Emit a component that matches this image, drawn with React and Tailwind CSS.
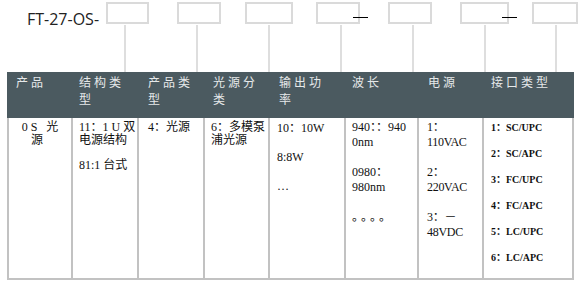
import React from 'react';

const boxes = [
    { ml: 'ml-0', w: 'w-[43px]', line: 'ml-[18px]', dash: false },
    { ml: 'ml-[28px]', w: 'w-[44px]', line: 'ml-[19px]', dash: false },
    { ml: 'ml-[24px]', w: 'w-[48px]', line: 'ml-[23px]', dash: false },
    { ml: 'ml-[23px]', w: 'w-[44px]', line: 'ml-[24px]', dash: true },
    { ml: 'ml-[28px]', w: 'w-[44px]', line: 'ml-[24px]', dash: false },
    { ml: 'ml-[28px]', w: 'w-[49px]', line: 'ml-[24px]', dash: true },
    { ml: 'ml-[23px]', w: 'w-[46px]', line: 'ml-[23px]', dash: false },
];

const headers = [
    { pad: 'pl-[7px]', lines: ['产品'] },
    { pad: 'pl-[6px]', lines: ['结构类', '型'] },
    { pad: 'pl-[9px]', lines: ['产品类', '型'] },
    { pad: 'pl-[8px]', lines: ['光源分', '类'] },
    { pad: 'pl-[9px]', lines: ['输出功', '率'] },
    { pad: 'pl-[6px]', lines: ['波长'] },
    { pad: 'pl-[9px]', lines: ['电源'] },
    { pad: 'pl-[7px]', lines: ['接口类型'] },
];

const serif = "font-['Liberation_Serif','Noto_Sans_CJK_SC',serif]";

export default function App() {
    return (
        <div className="w-[578px] h-[287px] bg-white overflow-hidden text-black">
            {/* code boxes */}
            <div className="flex h-[72px]">
                <div className="w-[106px] pl-[27px] pt-[9px] text-[16px] leading-[20px] text-[#222] font-['Open_Sans',sans-serif]">
                    FT-27-OS-
                </div>
                {boxes.map((b, i) => (
                    <div key={i} className={`flex flex-col pt-[2px] ${b.ml}`}>
                        <div className={`relative h-[22px] border-2 border-[#dadada] ${b.w}`}>
                            {b.dash && <div className="absolute right-[-10px] top-[13px] w-[15px] h-[1px] bg-black" />}
                        </div>
                        <div className={`w-[2px] h-[47px] mt-[1px] bg-[#dedede] ${b.line}`} />
                    </div>
                ))}
            </div>

            <div className="ml-[7px] w-[567px]">
                {/* header */}
                <div className="grid grid-cols-[62px_64px_64px_63px_74px_71px_63px_88px] gap-x-[2px] px-[2px] h-[46px] bg-[#4b5a60] text-[#e6e9ea] text-[12px] leading-[17px] tracking-[3px] font-['Noto_Sans_CJK_SC',sans-serif]">
                    {headers.map((h, i) => (
                        <div key={i} className={`pt-[1px] ${h.pad}`}>
                            {h.lines.map((l, j) => <div key={j}>{l}</div>)}
                        </div>
                    ))}
                </div>

                {/* body */}
                <div className={`grid grid-cols-[62px_64px_64px_63px_74px_71px_63px_88px] gap-x-[2px] px-[2px] pb-[2px] h-[162px] bg-[#c2c2c2] text-[12px] text-[#111] ${serif}`}>
                    <div className="bg-white pt-[3px] text-center leading-[12.5px]">
                        <div className="tracking-[3px] pl-[3px]">0S 光</div>
                        <div className="pr-[6px]">源</div>
                    </div>
                    <div className="bg-white pt-[3px] pl-[6px] leading-[12.5px]">
                        <div>11：1 U 双</div>
                        <div>电源结构</div>
                        <div className="mt-[13px]">81:1 台式</div>
                    </div>
                    <div className="bg-white pt-[3px] pl-[9px] leading-[12.5px]">
                        <div>4：光源</div>
                    </div>
                    <div className="bg-white pt-[3px] pl-[6px] leading-[12.5px]">
                        <div>6：多模泵</div>
                        <div>浦光源</div>
                    </div>
                    <div className="bg-white pt-[3px] pl-[7px] leading-[14.5px]">
                        <div>10：10W</div>
                        <div className="mt-[14.5px]">8:8W</div>
                        <div className="mt-[14.5px]">…</div>
                    </div>
                    <div className="bg-white pt-[2px] pl-[6px] leading-[15px]">
                        <div>940：：940</div>
                        <div>0nm</div>
                        <div className="mt-[15px]">0980：</div>
                        <div>980nm</div>
                        <div className="mt-[15px] tracking-[3px]">。。。。</div>
                    </div>
                    <div className="bg-white pt-[2px] pl-[8px] leading-[15px] tracking-[-0.3px]">
                        <div>1：</div>
                        <div>110VAC</div>
                        <div className="mt-[15px]">2：</div>
                        <div>220VAC</div>
                        <div className="mt-[15px]">3：－</div>
                        <div>48VDC</div>
                    </div>
                    <div className="bg-white pt-[3px] pl-[7px] text-[10px] font-bold leading-[13px]">
                        <div>1：SC/UPC</div>
                        <div className="mt-[13px]">2：SC/APC</div>
                        <div className="mt-[13px]">3：FC/UPC</div>
                        <div className="mt-[13px]">4：FC/APC</div>
                        <div className="mt-[13px]">5：LC/UPC</div>
                        <div className="mt-[13px]">6：LC/APC</div>
                    </div>
                </div>
            </div>
        </div>
    );
}
